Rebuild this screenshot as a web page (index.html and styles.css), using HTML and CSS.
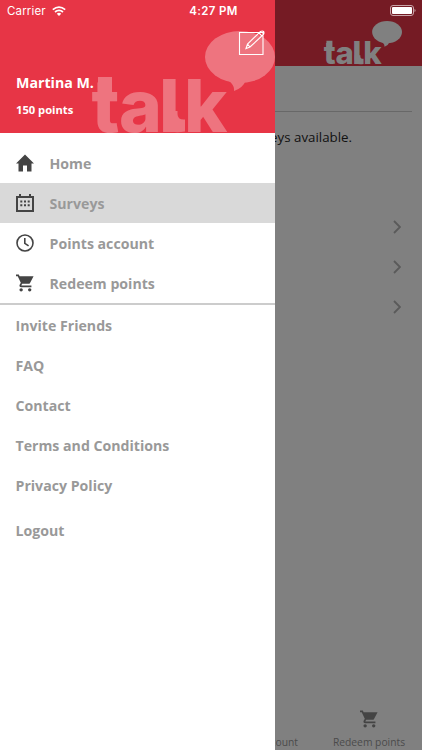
FILE: index.html
```html
<!DOCTYPE html>
<html lang="en">
<head>
<meta charset="utf-8">
<title>Talk</title>
<link rel="stylesheet" href="styles.css">
</head>
<body>
<svg width="0" height="0" class="defs">
  <symbol id="logo" viewBox="0 0 185 103">
    <text class="logo-letters" y="101" x="1.500 29 69 94">talk</text>
    <path d="M8 46h14v18H8zM74 80h13.500v3q0 6 7.500 5.500v12q-21 4-21-12z"/>
    <ellipse cx="150" cy="26" rx="35" ry="26"/>
    <path d="M130 45Q145 51 144 60Q153 57 156 49Z"/>
  </symbol>
  <symbol id="cart" viewBox="1 2 21 20"><path d="M7 18a2 2 0 1 0 0 4 2 2 0 0 0 0-4zM1 2v2h2l3.600 7.590-1.350 2.450C4.520 15.370 5.480 17 7 17h12v-2H7.420l-.15-.25.900-1.750h7.450c.75 0 1.410-.41 1.750-1.030L21.500 4H5.210l-.94-2zM17 18a2 2 0 1 0 0 4 2 2 0 0 0 0-4z"/></symbol>
</svg>
<div class="app">
  <main class="screen">
    <header class="topbar"><svg class="topbar-logo" viewBox="0 0 185 103"><use href="#logo"/></svg></header>
    <p class="notice">surveys available.</p>
    <ul class="list">
      <li><svg viewBox="0 0 8 14"><path d="M1 1l6 6-6 6"/></svg></li>
      <li><svg viewBox="0 0 8 14"><path d="M1 1l6 6-6 6"/></svg></li>
      <li><svg viewBox="0 0 8 14"><path d="M1 1l6 6-6 6"/></svg></li>
    </ul>
    <nav class="tabs">
      <span class="tab">Points account</span>
      <span class="tab"><svg class="cart"><use href="#cart"/></svg>Redeem points</span>
    </nav>
  </main>

  <aside class="drawer">
    <header class="profile">
      <svg class="profile-logo" viewBox="0 0 185 103"><use href="#logo"/></svg>
      <svg class="edit" viewBox="0 0 28 26"><path d="M1.500 2.500h23.500v22H1.500zM8 18.500l1.500-4.500L22.500 1.500q2-1 3 0t0 3L12 17zM9.500 14l2.500 3M21 3l3 3"/></svg>
      <strong class="name">Martina M.</strong>
      <span class="points">150 points</span>
    </header>
    <nav class="menu">
      <a class="item"><svg viewBox="0 0 18 18"><path d="M9 .5L0 9.500h2.500V17.500H7V11.500h4v6h4.500V9.500H18L15 6.500z"/></svg>Home</a>
      <a class="item active"><svg viewBox="0 0 18 18"><path class="line" d="M1 3h16v14H1zM4 0v4M14 0v4"/><path d="M4.300 6.600h2v2h-2zM8 6.600h2v2H8zM11.700 6.600h2v2h-2zM4.300 10.300h2v2h-2zM8 10.300h2v2H8zM11.700 10.300h2v2h-2z"/></svg>Surveys</a>
      <a class="item"><svg viewBox="0 0 18 18"><circle class="line thin" cx="9" cy="9" r="8"/><path class="line thin" d="M8.800 4v5.300l3.800 2.500"/></svg>Points account</a>
      <a class="item"><svg viewBox="0 0 18 18"><use href="#cart"/></svg>Redeem points</a>
    </nav>
    <nav class="menu links">
      <a class="item">Invite Friends</a>
      <a class="item">FAQ</a>
      <a class="item">Contact</a>
      <a class="item">Terms and Conditions</a>
      <a class="item">Privacy Policy</a>
      <a class="item logout">Logout</a>
    </nav>
  </aside>

  <div class="status">
    <span class="carrier">Carrier <svg viewBox="0 0 14 10"><path d="M.8 3.700Q7-1.600 13.200 3.700M3 6Q7 2.600 11 6"/><path class="dot" d="M4.800 7.700Q7 5.800 9.200 7.700L7 10z"/></svg></span>
    <span class="time">4:27 PM</span>
    <svg class="battery" viewBox="0 0 26 12"><rect class="case" x=".5" y=".5" width="23" height="10" rx="2.500"/><rect x="2" y="2" width="20" height="7" rx="1"/><path class="cap" d="M24.500 4v3q1-.3 1-1.500t-1-1.500z"/></svg>
  </div>
</div>
</body>
</html>
```
FILE: styles.css
```css
* { box-sizing: border-box; }
body { margin: 0; font-family: "Open Sans", sans-serif; }
.defs { position: absolute; }
.app { position: relative; width: 422px; height: 750px; overflow: hidden; }
.logo-letters { font: 800 73px Inter, sans-serif; stroke-width: 1px; }

.screen { display: flex; flex-direction: column; height: 750px; background: #808080; }
.topbar { display: flex; justify-content: flex-end; height: 66px; padding: 21px 20px 0 0; background: #751b24; }
.topbar-logo { width: 79px; height: 44px; fill: #808080; }
.notice { margin: 45px 10px 0; padding: 15px 60px 0 0; height: 95px; border-top: 1px solid #686868; text-align: right; font-size: 13.3px; line-height: 20px; color: #111; }
.list { list-style: none; margin: 0; padding: 0 20px; }
.list li { display: flex; align-items: center; justify-content: flex-end; height: 40px; }
.list svg { width: 8px; height: 14px; margin: 1px 1px 0 0; fill: none; stroke: #5a5a5a; stroke-width: 1.8; }
.tabs { display: flex; justify-content: flex-end; align-items: flex-end; margin-top: auto; height: 44px; gap: 14px; font-size: 10.3px; line-height: 16px; color: #4b4b4b; }
.tab { display: flex; flex-direction: column; align-items: center; width: 106px; white-space: nowrap; }
.tab:first-child { align-items: flex-end; width: 90px; margin-right: 4px; }
.cart { width: 18px; height: 18px; margin-bottom: 6px; fill: #444; }

.drawer { position: absolute; inset: 0 auto 0 0; width: 275px; background: #fff; }
.profile { position: relative; display: flex; flex-direction: column; height: 133px; padding: 71.600px 16px 0; background: #e73546; color: #fff; overflow: hidden; }
.profile-logo { position: absolute; left: 90px; top: 31px; width: 185px; height: 103px; fill: #fff; opacity: .31; }
.edit { position: absolute; left: 238px; top: 30px; width: 28px; height: 26px; fill: none; stroke: #fff; stroke-width: 1.1; }
.name { position: relative; font-size: 14.2px; line-height: 22px; }
.points { position: relative; margin-top: 7.400px; font-size: 11.2px; font-weight: 700; line-height: 18px; }
.menu { padding-top: 10px; border-bottom: 2px solid #ccc; }
.item { display: flex; align-items: center; gap: 16px; height: 40px; padding: 0 16px 0 15.500px; font-size: 14.15px; font-weight: 700; color: #999; }
.item svg { width: 18px; height: 18px; fill: #444; }
.item .line { fill: none; stroke: #444; stroke-width: 2; }
.item .thin { stroke-width: 1.6; }
.active { background: #d9d9d9; }
.links { padding-top: 0; border: 0; }
.logout { margin-top: 5px; }

.status { position: absolute; inset: 0 0 auto; display: grid; grid-template-columns: 1fr auto 1fr; align-items: center; height: 22px; padding: 0 6px 0 7px; color: #fff; font: 11.5px Inter, sans-serif; }
.carrier { display: flex; align-items: center; gap: 6px; letter-spacing: .15px; }
.carrier svg { width: 14px; height: 10px; fill: none; stroke: #fff; stroke-width: 1.7; }
.carrier .dot { fill: #fff; stroke: none; }
.time { font-weight: 600; letter-spacing: .35px; transform: translateX(2px); }
.battery { justify-self: end; width: 26px; height: 12px; fill: #fff; }
.battery .case { fill: none; stroke: #c9a4a8; }
.battery .cap { fill: #c9a4a8; }
```
